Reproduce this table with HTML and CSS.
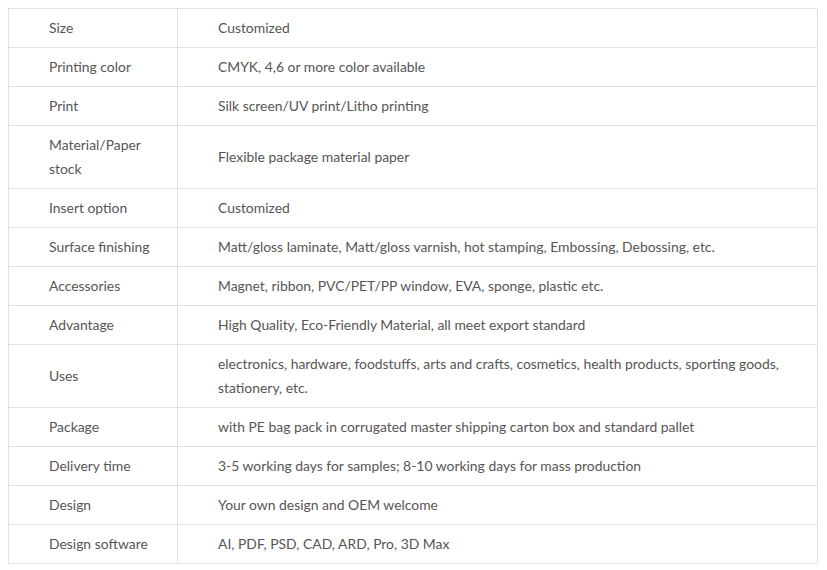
FILE: index.html
```html
<!DOCTYPE html>
<html>
<head>
<meta charset="utf-8">
<link rel="stylesheet" href="styles.css">
</head>
<body>
<table class="spec">
<tbody>
<tr><td class="k">Size</td><td class="v">Customized</td></tr>
<tr><td class="k">Printing color</td><td class="v">CMYK, 4,6 or more color available</td></tr>
<tr><td class="k">Print</td><td class="v">Silk screen/UV print/Litho printing</td></tr>
<tr><td class="k">Material/Paper stock</td><td class="v">Flexible package material paper</td></tr>
<tr><td class="k">Insert option</td><td class="v">Customized</td></tr>
<tr><td class="k">Surface finishing</td><td class="v">Matt/gloss laminate, Matt/gloss varnish, hot stamping, Embossing, Debossing, etc.</td></tr>
<tr><td class="k">Accessories</td><td class="v">Magnet, ribbon, PVC/PET/PP window, EVA, sponge, plastic etc.</td></tr>
<tr><td class="k">Advantage</td><td class="v">High Quality, Eco-Friendly Material, all meet export standard</td></tr>
<tr><td class="k">Uses</td><td class="v">electronics, hardware, foodstuffs, arts and crafts, cosmetics, health products, sporting goods, stationery, etc.</td></tr>
<tr><td class="k">Package</td><td class="v">with PE bag pack in corrugated master shipping carton box and standard pallet</td></tr>
<tr><td class="k">Delivery time</td><td class="v">3-5 working days for samples; 8-10 working days for mass production</td></tr>
<tr><td class="k">Design</td><td class="v">Your own design and OEM welcome</td></tr>
<tr><td class="k">Design software</td><td class="v">AI, PDF, PSD, CAD, ARD, Pro, 3D Max</td></tr>
</tbody>
</table>
</body>
</html>
```
FILE: styles.css
```css
body {
  margin: 8px;
  background: #fff;
  font-family: Lato, "Open Sans", sans-serif;
  font-size: 13.9px;
  color: #585555;
}
.spec {
  width: 810px;
  border-collapse: collapse;
  table-layout: fixed;
}
.spec td {
  border: 1px solid #e2e2e2;
  padding: 7px 30px 7px 40px;
  line-height: 24px;
  vertical-align: middle;
}
.spec td.k {
  width: 113px;
  padding-right: 15px;
}
```
